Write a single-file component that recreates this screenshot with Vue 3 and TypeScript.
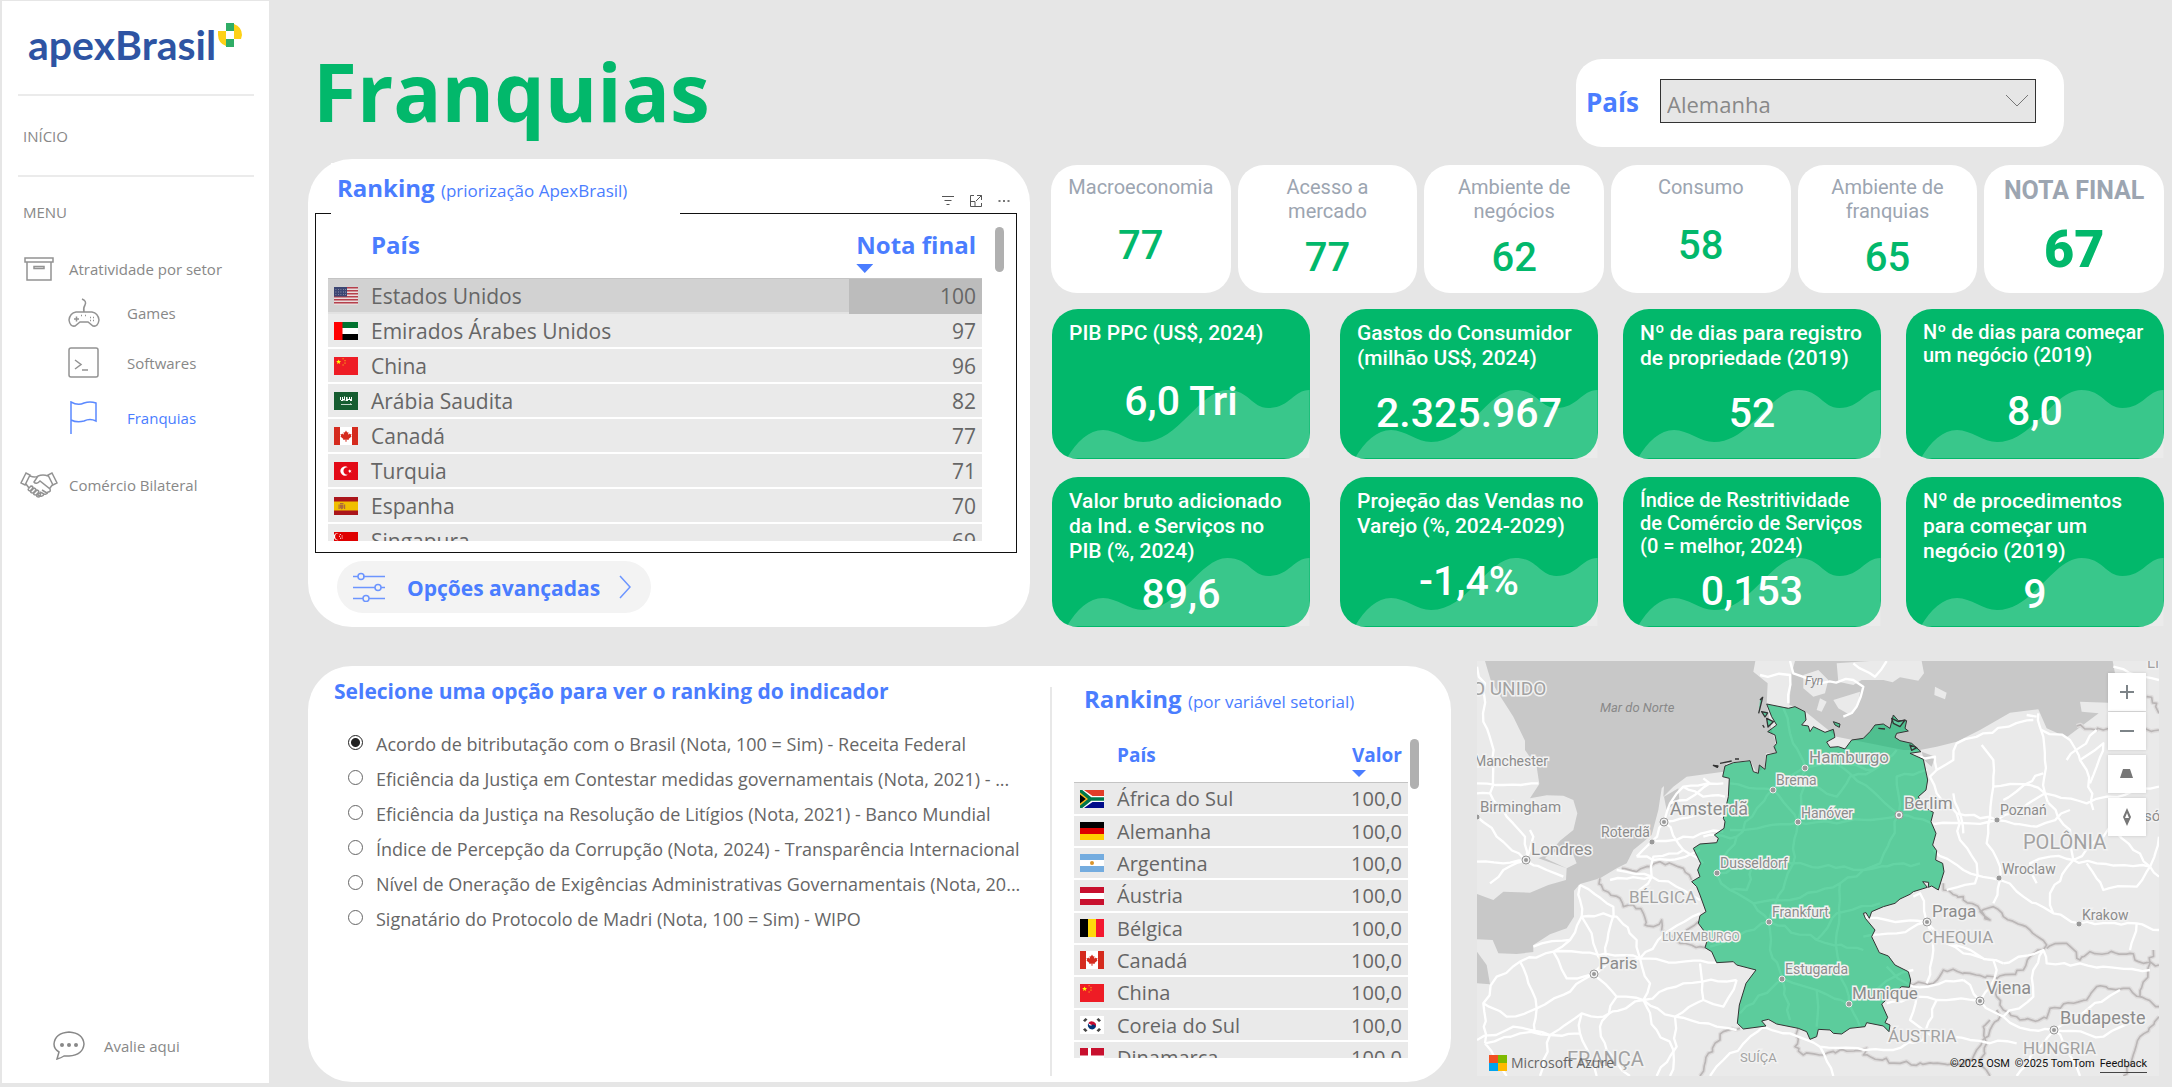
<script setup lang="ts">
import { ref } from 'vue'

interface Shape { d: string; fill: string }
interface Row { flag: string; name: string; value: string }
interface Score { label: string; value: string; final?: boolean }
interface Kpi { lines: string[]; value: string; small?: boolean }
interface City { name: string; x: number; y: number; size: number; dot?: [number, number]; capital?: boolean; cls?: string }

const country = ref('Alemanha')
const indicator = ref(0)

const box = (x: number, y: number, w: number, h: number) => `M${x} ${y}h${w}v${h}h${-w}z`

// Breaks every straight run of a polyline into short, slightly bent pieces.
function rough(d: string, step: number, amp: number): string {
  let seed = 7
  const rand = () => {
    seed = (seed * 16807) % 2147483647
    return seed / 2147483647 - 0.5
  }
  return d
    .split('M')
    .filter(Boolean)
    .map((run) => {
      const n = (run.match(/\d+/g) ?? []).map(Number)
      let out = `M${n[0]} ${n[1]}`
      for (let i = 2; i + 1 < n.length; i += 2) {
        const dx = n[i] - n[i - 2]
        const dy = n[i + 1] - n[i - 1]
        const parts = Math.max(1, Math.round(Math.hypot(dx, dy) / step))
        for (let k = 1; k < parts; k++) {
          const x = n[i - 2] + (dx * k) / parts + rand() * amp
          const y = n[i - 1] + (dy * k) / parts + rand() * amp
          out += `L${x.toFixed(1)} ${y.toFixed(1)}`
        }
        out += `L${n[i]} ${n[i + 1]}`
      }
      return out
    })
    .join('')
}

const flags: Record<string, Shape[]> = {
  us: [
    { d: box(0, 0, 24, 18), fill: '#e9dcdc' },
    { d: [0, 3, 6, 9, 12, 15].map((y) => box(0, y, 24, 1.5)).join(''), fill: '#b5404c' },
    { d: box(0, 0, 13, 9.5), fill: '#3c4673' },
    { d: [2, 4.6, 7.2].map((y) => [1.5, 4, 6.5, 9, 11].map((x) => box(x, y, 0.8, 0.8)).join('')).join(''), fill: '#aab' },
  ],
  ae: [
    { d: box(0, 0, 24, 6), fill: '#00732f' },
    { d: box(0, 6, 24, 6), fill: '#fff' },
    { d: box(0, 12, 24, 6), fill: '#000' },
    { d: box(0, 0, 8.5, 18), fill: '#f00' },
  ],
  cn: [
    { d: box(0, 0, 24, 18), fill: '#ee1c25' },
    { d: 'M4.6 2.4l.7 1.7h1.8l-1.4 1.1.5 1.8-1.6-1.1L3 7l.5-1.8L2.100 4.100h1.800z', fill: '#ff0' },
    { d: box(8.5, 1.3, 1.2, 1) + box(10.5, 3, 1, 1.2) + box(10.5, 5.6, 1, 1.2) + box(8.5, 7.4, 1.2, 1), fill: '#f9b616' },
  ],
  sa: [
    { d: box(0, 0, 24, 18), fill: '#165d31' },
    { d: 'M6 5h1v3h1V5h1v2h1V4.500h1V8h1V5h1.500v2H15V5h1v2h1V5h1v4h-2V8h-2v1h-2V8.500H9V9H7V8H6zM7 12h9v-.6h1v.6h1v.8H7z', fill: '#fff' },
  ],
  ca: [
    { d: box(0, 0, 24, 18), fill: '#fff' },
    { d: box(0, 0, 6, 18) + box(18, 0, 6, 18) + 'M12 3.500l1.200 2 1.200-.6-.3 2.800 1.400-1.300.4.9 1.600-.2-.6 1.800.7.5-3 2.600.2.900-2.300-.3v2.200h-1v-2.200l-2.300.3.2-.9-3-2.600.7-.5-.6-1.800 1.600.2.4-.9 1.400 1.300-.3-2.800 1.200.6z', fill: '#d52b1e' },
  ],
  tr: [
    { d: box(0, 0, 24, 18), fill: '#e30a17' },
    { d: 'M14 5.400a4.600 4.600 0 1 0 0 7.200 3.700 3.700 0 1 1 0-7.200zM15 7.300l1 1.100 1.500-.4-.8 1.200.8 1.200-1.500-.4-1 1.100V9.600l-1.300-.5L15 8.600z', fill: '#fff' },
  ],
  es: [
    { d: box(0, 0, 24, 18), fill: '#aa151b' },
    { d: box(0, 4.5, 24, 9), fill: '#f1bf00' },
    { d: box(4.5, 7.5, 1.2, 4.5) + box(10, 7.5, 1.2, 4.5) + box(6, 6, 3.5, 1.5) + 'M6 8h3.500v3l-1.700 1.500L6 11z', fill: '#ad6a3c' },
  ],
  sg: [
    { d: box(0, 0, 24, 9), fill: '#df0000' },
    { d: box(0, 9, 24, 9), fill: '#fff' },
    { d: 'M4.500 1.200a3.600 3.600 0 1 0 0 6.800 3.400 3.400 0 0 1 0-6.800z' + box(5.8, 2, 1, 1) + box(7.6, 3.4, 1, 1) + box(5, 3.8, 1, 1) + box(6, 5.7, 1, 1) + box(7.7, 5.6, 1, 1), fill: '#fff' },
  ],
  za: [
    { d: box(0, 0, 24, 9), fill: '#e23d28' },
    { d: box(0, 9, 24, 9), fill: '#000c8a' },
    { d: 'M0 0h4l8.500 6H24v6H12.500L4 18H0z', fill: '#fff' },
    { d: 'M0 0h2.300l9 7.300H24v3.400H11.300L2.300 18H0z', fill: '#007749' },
    { d: 'M0 2.600L8 9l-8 6.400z', fill: '#ffb81c' },
    { d: 'M0 4.500L5.800 9 0 13.500z', fill: '#000' },
  ],
  de: [
    { d: box(0, 0, 24, 6), fill: '#000' },
    { d: box(0, 6, 24, 6), fill: '#d00' },
    { d: box(0, 12, 24, 6), fill: '#ffce00' },
  ],
  ar: [
    { d: box(0, 0, 24, 18), fill: '#74acdf' },
    { d: box(0, 6, 24, 6), fill: '#fff' },
    { d: 'M12 7a2 2 0 1 1 0 4 2 2 0 0 1 0-4z', fill: '#d9942c' },
  ],
  at: [
    { d: box(0, 0, 24, 18), fill: '#c8102e' },
    { d: box(0, 6, 24, 6), fill: '#fff' },
  ],
  be: [
    { d: box(0, 0, 8, 18), fill: '#000' },
    { d: box(8, 0, 8, 18), fill: '#ffd90c' },
    { d: box(16, 0, 8, 18), fill: '#f31830' },
  ],
  kr: [
    { d: box(0, 0, 24, 18), fill: '#fff' },
    { d: 'M8.200 7.200a4.300 4.300 0 0 1 7.600 3.800z', fill: '#c60c30' },
    { d: 'M8.200 7.200c-2 5 5 9 7.600 3.800-.3-2.500-3-3-3.800-2s-3 1-3.800-1.800z', fill: '#003478' },
    { d: 'M3 4.500L5.500 2l2 1.500L5 6zM16.500 3.500l2-1.500L21 4.500 19 6zM3 13.500L5 12l2.500 2.500-2 1.500zM16.500 14.500L19 12l2 1.500-2.500 2.500z', fill: '#444' },
  ],
  dk: [
    { d: box(0, 0, 24, 18), fill: '#c8102e' },
    { d: box(8, 0, 3, 18) + box(0, 7.5, 24, 3), fill: '#fff' },
  ],
}

const ranking: Row[] = [
  { flag: 'us', name: 'Estados Unidos', value: '100' },
  { flag: 'ae', name: 'Emirados Árabes Unidos', value: '97' },
  { flag: 'cn', name: 'China', value: '96' },
  { flag: 'sa', name: 'Arábia Saudita', value: '82' },
  { flag: 'ca', name: 'Canadá', value: '77' },
  { flag: 'tr', name: 'Turquia', value: '71' },
  { flag: 'es', name: 'Espanha', value: '70' },
  { flag: 'sg', name: 'Singapura', value: '69' },
]

const sector: Row[] = [
  { flag: 'za', name: 'África do Sul', value: '100,0' },
  { flag: 'de', name: 'Alemanha', value: '100,0' },
  { flag: 'ar', name: 'Argentina', value: '100,0' },
  { flag: 'at', name: 'Áustria', value: '100,0' },
  { flag: 'be', name: 'Bélgica', value: '100,0' },
  { flag: 'ca', name: 'Canadá', value: '100,0' },
  { flag: 'cn', name: 'China', value: '100,0' },
  { flag: 'kr', name: 'Coreia do Sul', value: '100,0' },
  { flag: 'dk', name: 'Dinamarca', value: '100,0' },
]

const scores: Score[] = [
  { label: 'Macroeconomia', value: '77' },
  { label: 'Acesso a mercado', value: '77' },
  { label: 'Ambiente de negócios', value: '62' },
  { label: 'Consumo', value: '58' },
  { label: 'Ambiente de franquias', value: '65' },
  { label: 'NOTA FINAL', value: '67', final: true },
]

const kpis: Kpi[] = [
  { lines: ['PIB PPC (US$, 2024)'], value: '6,0 Tri' },
  { lines: ['Gastos do Consumidor', '(milhão US$, 2024)'], value: '2.325.967' },
  { lines: ['Nº de dias para registro', 'de propriedade (2019)'], value: '52' },
  { lines: ['Nº de dias para começar', 'um negócio (2019)'], value: '8,0', small: true },
  { lines: ['Valor bruto adicionado', 'da Ind. e Serviços no', 'PIB (%, 2024)'], value: '89,6' },
  { lines: ['Projeção das Vendas no', 'Varejo (%, 2024-2029)'], value: '-1,4%' },
  { lines: ['Índice de Restritividade', 'de Comércio de Serviços', '(0 = melhor, 2024)'], value: '0,153', small: true },
  { lines: ['Nº de procedimentos', 'para começar um', 'negócio (2019)'], value: '9' },
]

const indicators: string[] = [
  'Acordo de bitributação com o Brasil (Nota, 100 = Sim) - Receita Federal',
  'Eficiência da Justiça em Contestar medidas governamentais (Nota, 2021) - ...',
  'Eficiência da Justiça na Resolução de Litígios (Nota, 2021) - Banco Mundial',
  'Índice de Percepção da Corrupção (Nota, 2024) - Transparência Internacional',
  'Nível de Oneração de Exigências Administrativas Governamentais (Nota, 20...',
  'Signatário do Protocolo de Madri (Nota, 100 = Sim) - WIPO',
]

const places: City[] = [
  { name: 'O UNIDO', x: -5, y: 34, size: 19, cls: 'land' },
  { name: 'Mar do Norte', x: 123, y: 51, size: 13, cls: 'water' },
  { name: 'Fyn', x: 328, y: 24, size: 12, cls: 'water' },
  { name: 'Manchester', x: -3, y: 105, size: 14 },
  { name: 'Birmingham', x: 3, y: 151, size: 15, dot: [0, 156] },
  { name: 'Londres', x: 54, y: 194, size: 17, dot: [49, 199], capital: true },
  { name: 'Amsterdã', x: 193, y: 154, size: 18, dot: [187, 161], capital: true },
  { name: 'Roterdã', x: 124, y: 176, size: 14, dot: [175, 181] },
  { name: 'BÉLGICA', x: 152, y: 242, size: 17, cls: 'land' },
  { name: 'LUXEMBURGO', x: 185, y: 280, size: 12, cls: 'land' },
  { name: 'Paris', x: 122, y: 308, size: 17, dot: [117, 313], capital: true },
  { name: 'FRANÇA', x: 90, y: 405, size: 20, cls: 'land' },
  { name: 'SUÍÇA', x: 263, y: 401, size: 13, cls: 'land' },
  { name: 'Hamburgo', x: 332, y: 102, size: 17, dot: [328, 107] },
  { name: 'Brema', x: 299, y: 124, size: 14, dot: [296, 129] },
  { name: 'Hanóver', x: 324, y: 157, size: 14, dot: [321, 161] },
  { name: 'Dusseldorf', x: 243, y: 207, size: 14, dot: [240, 212] },
  { name: 'Frankfurt', x: 295, y: 256, size: 14, dot: [292, 261] },
  { name: 'Estugarda', x: 308, y: 313, size: 14, dot: [305, 318] },
  { name: 'Munique', x: 375, y: 338, size: 17, dot: [372, 343] },
  { name: 'Berlim', x: 427, y: 148, size: 17, dot: [422, 154], capital: true },
  { name: 'Poznań', x: 523, y: 154, size: 14, dot: [520, 159] },
  { name: 'POLÔNIA', x: 546, y: 188, size: 20, cls: 'land' },
  { name: 'Wroclaw', x: 525, y: 213, size: 14, dot: [522, 217] },
  { name: 'Krakow', x: 605, y: 259, size: 14, dot: [602, 263] },
  { name: 'Praga', x: 455, y: 256, size: 17, dot: [450, 261], capital: true },
  { name: 'CHEQUIA', x: 445, y: 282, size: 17, cls: 'land' },
  { name: 'Viena', x: 509, y: 333, size: 18, dot: [503, 340], capital: true },
  { name: 'Budapeste', x: 583, y: 363, size: 18, dot: [577, 369], capital: true },
  { name: 'ÁUSTRIA', x: 411, y: 381, size: 17, cls: 'land' },
  { name: 'HUNGRIA', x: 546, y: 393, size: 17, cls: 'land' },
  { name: 'só', x: 667, y: 160, size: 15 },
  { name: 'LI', x: 670, y: 7, size: 15, cls: 'land' },
]

const sea =
  'M45 33L62 90 85 130 130 200 165 272 165 300 200 350 208 402 180 445 230 436 280 437 310 450 322 490 310 540 270 572 225 625 290 655 288 690 235 705 180 728 100 725 70 750 21 732V868L68 870 85 910 140 912 190 906 190 885 240 853 290 835 312 800 312 722 330 702 390 685 440 655 470 640 490 600 545 555 565 480 575 415 582 408 580 440 610 410 650 380 760 365 770 340 840 330 860 370 885 350 888 310 920 310 915 270 905 240 890 165 893 100 850 65 856 33z' +
  'M21 905L50 945 60 1003 21 1000z' +
  'M975 33L965 70 958 165 1000 180 1100 260 1300 300 1350 300 1400 290 1460 275 1530 240 1620 188 1705 178 1730 235 1790 262 1886 190 1835 185 1830 155 1915 158 1935 70 1928 33z' +
  'M1355 305L1395 320 1385 350 1362 330z' +
  'M582 440L625 415 628 450 590 480z' +
  'M205 625L270 600 300 590 320 640 290 655z'
const islands =
  'M1000 75L1045 60 1075 90 1065 130 1030 140 1000 115z' +
  'M1100 40L1200 33H1355L1362 70 1345 92 1290 82 1268 97 1240 90 1175 90 1150 105 1105 95z' +
  'M1090 150L1170 125 1165 165 1140 195 1105 175z' +
  'M1395 110L1430 128 1425 148 1393 135z' +
  'M1050 145l20 10-15 30-15-5z'
const roads = [
  'M21 50L45 100 40 215 65 280 70 350 21 350M70 350L60 430 110 500 165 560 168 632 100 660 60 700M168 632L230 660 280 680M21 500L80 560 168 632M21 635L100 640 168 632M21 400L100 405 205 400M168 632L190 560 180 540M60 430L21 430',
  'M330 705L335 800 300 870 250 905 150 935 80 980 40 1060 45 1180M250 905L360 908 510 925 600 840 690 790M330 705L430 770 415 850 400 940 370 972M370 972L300 1025 200 1075 110 1100 40 1060M370 972L440 1040 520 1050 615 1100 620 1190 560 1278M510 925L540 1000 520 1050 400 1100 335 1090 240 1155 210 1278M510 925L640 935 740 938M520 1050L640 1000 800 990',
  'M370 972L440 930 510 925M440 660L545 680 640 720 690 750M545 680L550 620 640 600 700 640M480 760L545 680 420 690M582 516L640 600M582 516L600 460 640 410 760 400M582 516L700 490 765 500M582 516L545 575 500 620M640 410L700 440 765 440M545 575L640 560 760 545M600 460L650 450 720 400 700 385M500 620L600 630 690 600',
  'M335 1090L330 1150 380 1278M45 1180L150 1150 240 1155 330 1150M45 1180L110 1278M240 1155L130 1130 21 1170M615 1100L700 1050 690 940M615 1100L740 1130 800 1140M800 990L760 1070 700 1050M300 870L215 880 190 890M250 905L290 985 370 972M400 940L370 880 335 800 400 790 440 800 500 870 510 925M150 935L175 1000 200 1075 195 1150M440 1040L390 1130 410 1200 480 1278M520 1050L560 1140 610 1200 600 1278',
  'M740 670L780 720 850 760 897 815 900 900 937 986 1040 1020 1137 1062M740 670L800 560 908 418 1005 352 1100 340 1287 493M984 517L1100 520 1287 493 1390 522M908 418L984 517 970 640 897 815 1040 870 1180 900M1005 352L984 517M1287 493L1230 640 1180 660 1110 700 1100 900 1137 1062M1137 1062L1230 1010 1330 960M740 670L850 640 970 640 1180 660 1350 640M780 540L984 517M908 418L780 400M1005 352L960 250 940 175M1100 340L1210 360 1280 300M1287 493L1280 380 1370 360M937 986L850 1060 810 1090M937 986L960 1110M897 815L800 860 720 890M1040 870L1100 790 1230 760M850 760L960 750 1110 700M1040 1020L1040 1130M850 640L830 720 780 720M800 560L700 560M960 380L1100 440 1140 380 1210 360M1137 1062L1170 1130',
  'M1350 320L1395 320 1400 360 1380 380 1400 430 1460 490 1580 510 1700 530 1800 480M1400 360L1450 330 1460 280 1540 250 1690 210M1535 285L1570 330 1570 410 1560 500 1550 580 1590 650 1590 690 1570 760M1390 522L1500 520 1580 510M1570 410L1680 405 1725 430 1580 510M1705 190L1720 260 1725 430 1800 540 1810 630 1740 730 1750 790M1715 240L1800 270 1830 330 1850 360 1870 480M1725 430L1850 460 1910 440 2067 410M1810 630L1900 560 1920 530 1990 600 2040 650M1390 600L1480 660 1590 690 1660 740 1750 790 1830 820 2000 820 2067 840',
  'M1810 630L1880 640 2040 650 2067 680M1740 620L1810 630M1460 490L1470 570 1520 640 1515 700 1430 720M1370 816L1250 810 1180 800M1370 816L1350 730 1330 740M1370 816L1430 880 1480 910 1600 940M1370 816L1390 900 1370 1000M1180 860L1280 850 1370 816M1430 880L1570 930 1580 960 1530 1053M1531 1053L1400 1050 1340 1040 1250 1060M1531 1053L1600 1100 1680 1140 1753 1140 1850 1080 1950 1020M1753 1140L1790 1200 1830 1278M1753 1140L1700 1200 1640 1278M1340 1040L1320 1110 1390 1160 1500 1170 1640 1180',
  'M1600 940L1720 900 1730 940 1900 950 2040 960M1720 900L1690 960 1690 1040 1600 1100M1753 1140L1900 1160 2000 1110M1450 430L1480 550M1700 200L1670 195M1830 330L1900 280 1880 350 1860 400M1880 240L1790 330M1720 370L1600 450M1850 640L1900 720 2000 710 2040 650M2000 820L1980 900M1250 950L1330 1010 1480 990M1400 1050L1360 1170 1240 1200 1050 1190 960 1150 880 1130 760 1230 720 1278M1050 1190L1090 1278M1480 990L1531 1053M1700 700L1680 640 1740 620M1930 50L2067 90M2040 650L2067 560',
  'M870 75L960 75 955 160M960 33L970 70 1050 100 1150 90 1180 110 1160 170 1120 200M1150 40L1215 80 1250 33',
].map((d) => rough(d, 26, 13))
const borders = [
  'M390 685L400 720 450 745 460 770 490 765 520 790 525 825 550 830 575 810 575 840 630 880 690 890 705 893M455 655L500 665 540 650 570 635 640 655 665 690M635 880L650 840 685 815M690 1278L715 1210 750 1170 760 1145 810 1135M985 1135L975 1190 1000 1215 1060 1215 1110 1200 1190 1195 1180 1215 1290 1240 1390 1240 1480 1245 1520 1200 1560 1140 1590 1100 1580 1080',
  'M1320 1000L1390 1000 1420 960 1500 970 1580 985 1660 960 1680 920 1730 885 1680 840 1600 800 1570 770 1530 785 1560 810 1530 780 1480 750 1480 740 1420 720 1420 700M1730 895L1790 880 1830 930 1860 905 1980 910 2020 940 2067 945M1580 985L1580 1040 1600 1080 1650 1110 1730 1105 1740 1075 1850 1050 1880 1010 1960 1015 2010 1040 2067 1070M2010 1040L2040 940 2050 900M1560 1110L1540 1130 1550 1180 1530 1240 1560 1278M2067 1100L2010 1160 1960 1278M1820 228L1900 240 2067 240M2030 140L2060 160 2067 190',
].map((d) => rough(d, 14, 13))
const germany =
  'M890 162L955 175 975 170 1005 185 1008 210 995 225 1015 228 1020 245 1030 230 1065 247 1090 238 1095 262 1070 276 1080 292 1105 290 1125 297 1145 270 1180 265 1200 245 1215 225 1240 222 1260 235 1270 195 1285 212 1310 212 1305 235 1315 243 1280 250 1275 262 1290 272 1325 280 1353 305 1320 310 1360 328 1373 390 1368 420 1345 440 1360 470 1390 487 1383 515 1398 550 1388 585 1400 602 1397 630 1418 640 1422 665 1405 720 1385 708 1375 712 1376 697 1358 695 1372 712 1330 725 1320 733 1290 747 1275 760 1240 770 1205 785 1198 805 1188 788 1180 790 1186 805 1215 840 1205 860 1228 908 1255 918 1275 945 1315 965 1322 990 1318 1012 1295 1010 1265 1035 1235 1062 1253 1102 1245 1118 1260 1125 1257 1145 1240 1128 1190 1118 1185 1130 1140 1135 1115 1152 1090 1150 1080 1140 1045 1138 1040 1160 1020 1168 1010 1145 985 1135 920 1122 895 1108 875 1113 888 1128 820 1137 802 1120 808 1065 828 1000 858 960 800 945 790 935 740 938 725 905 705 893 715 860 685 820 690 797 708 785 690 735 680 710 665 695 690 680 683 660 692 640 670 595 690 582 740 578 745 565 733 555 762 535 765 515 760 505 775 440 778 385 758 380 765 348 790 338 840 332 850 365 865 370 868 345 885 358 890 315 920 308 912 290 920 280 915 255 893 245 920 225 905 200z' +
  'M1095 225L1090 215 1110 222 1108 232z'
const reefs = 'M870 150L878 142 866 190M875 185l18 4-8 12zM890 205l20 10-16 16zM878 225l5 8M730 346l12 6 2-4zM750 340l35-7M795 327l12 0M1265 205l20 10 20-5-15 20-20-10zM1320 285l20 8-15 8zM1225 235l20 2'
</script>

<template>
  <div class="app">
    <aside class="sidebar">
      <div class="logo">
        <span>apexBrasil</span>
        <svg width="24" height="24" viewBox="0 0 24 24" aria-hidden="true">
          <path fill="#2fad66" d="M8 0h8v8H8zM8 16h8v8H8z" />
          <path fill="#fdd116" d="M16 1a12 12 0 0 1 8 11l-1 4h-7V8zM0 8h8v15A12 12 0 0 1 0 12z" />
          <path fill="#fff" d="M8 8h8v8H8z" />
        </svg>
      </div>
      <nav>
        <a class="plain ruled" href="#inicio">INÍCIO</a>
        <p class="plain">MENU</p>
        <a class="item h44" href="#setor">
          <span class="ico"><svg width="30" height="24" viewBox="0 0 30 24"><path d="M1 1h28v4H1zM3 5v18h24V5M10 9.500h10v2H10z" /></svg></span>
          Atratividade por setor
        </a>
        <a class="item sub h44" href="#games">
          <span class="ico"><svg width="32" height="30" viewBox="0 0 32 30"><path d="M14 1q5 2 3 6-2 3-1 7M8 14h16q6 1 7 8-1 7-6 6l-5-4h-8l-5 4q-5 1-6-6 1-7 7-8zM6 21h5M8.500 18.500v5" /><path d="M13 17.500h1M17 17.500h1M25 19.500h1M22 22.500h1M22 19.500h1M25 22.500h1" /></svg></span>
          Games
        </a>
        <a class="item sub h56" href="#softwares">
          <span class="ico"><svg width="32" height="32" viewBox="0 0 32 32"><rect x="1" y="1" width="29" height="29" rx="2" /><path d="M7 13l6 4.500L7 22M14 23h6" /></svg></span>
          Softwares
        </a>
        <a class="item sub h54 active" href="#franquias">
          <span class="ico"><svg width="32" height="34" viewBox="0 0 32 34"><path d="M3 33V1q7 4 13 1 6-2 12 0v18q-6-3-12 0-7 2-13-1" /></svg></span>
          Franquias
        </a>
        <a class="item h80" href="#bilateral">
          <span class="ico"><svg width="38" height="26" viewBox="0 0 38 26"><path d="M6 1L1 11l4 2 5-10zM32 1l5 10-4 2-5-10zM10 4q5 2 8 0l-4 6q2 3 6-1l10 8q1 3-2 3-1 3-4 2-1 3-4 2l-2-1M28 4q-5-2-10 0M6 12l3 4M33 12l-3 4M9 16l2-2q3 0 1 3l-2 2q-3-1-1-3zM11 19l3-3q3 1 1 3l-2 2q-3 0-2-2zM14 21l3-3q3 1 1 3l-2 2q-3 0-2-2zM17 23l2-2q3 1 0 4-3 0-2-2zM22 18l5 3M20 20l4 2" /></svg></span>
          Comércio Bilateral
        </a>
      </nav>
      <a class="rate" href="#avalie">
        <svg width="32" height="30" viewBox="0 0 32 30"><path d="M4 28l2-7Q1 18 1 13 2 2 16 1q14 1 15 12-1 11-15 12-2 0-5 0-3 2-7 3z" /><g class="dots"><circle cx="9" cy="14" r="2" /><circle cx="16" cy="14" r="2" /><circle cx="23" cy="14" r="2" /></g></svg>
        Avalie aqui
      </a>
    </aside>

    <main>
      <header class="top">
        <h1>Franquias</h1>
        <div class="filter">
          <label for="pais">País</label>
          <div class="select">
            <select id="pais" v-model="country">
              <option>Alemanha</option>
              <option>Argentina</option>
              <option>Canadá</option>
            </select>
            <svg width="24" height="14" viewBox="0 0 24 14" aria-hidden="true"><path d="M1 1l11 11L23 1" /></svg>
          </div>
        </div>
      </header>

      <section class="upper">
        <div class="panel ranking">
          <div class="ranking-head">
            <h2>Ranking <small>(priorização ApexBrasil)</small></h2>
            <div class="tools">
              <button type="button" aria-label="Filtros"><svg width="14" height="14" viewBox="0 0 14 14"><path d="M1 2.500h12M3.500 6.500h7M5.500 10.500h3" /></svg></button>
              <button type="button" aria-label="Modo de foco"><svg width="14" height="14" viewBox="0 0 14 14"><path d="M5 1.500H1.500v11h11V9M8 1.500h4.500V6M12.500 1.500L7 7M1.500 7.500H6v5" /></svg></button>
              <button type="button" aria-label="Mais opções"><svg width="14" height="14" viewBox="0 0 14 14"><path class="solid" d="M1.500 6h2v2h-2zM6 6h2v2H6zM10.500 6h2v2h-2z" /></svg></button>
            </div>
          </div>
          <div class="frame">
            <div class="clip">
              <table class="big">
                <thead>
                  <tr><th class="flag"></th><th>País</th><th class="num"><span>Nota final<i class="sort"></i></span></th></tr>
                </thead>
                <tbody>
                  <tr v-for="(r, i) in ranking" :key="r.name" :class="{ selected: i === 0 }">
                    <td class="flag"><svg width="24" height="18" viewBox="0 0 24 18"><path v-for="(s, k) in flags[r.flag]" :key="k" :d="s.d" :fill="s.fill" /></svg></td>
                    <td>{{ r.name }}</td>
                    <td class="num">{{ r.value }}</td>
                  </tr>
                </tbody>
              </table>
            </div>
            <span class="bar"></span>
          </div>
          <button type="button" class="advanced">
            <svg width="32" height="30" viewBox="0 0 32 30"><path d="M0 4.500h5M10 4.500h22M0 15.500h22M28 15.500h4M0 26.500h10M16 26.500h16" /><circle cx="8" cy="4.500" r="3" /><circle cx="25" cy="15.500" r="3" /><circle cx="13" cy="26.500" r="3" /></svg>
            <span>Opções avançadas</span>
            <svg width="12" height="24" viewBox="0 0 12 24"><path d="M1 1l10 11L1 23" /></svg>
          </button>
        </div>

        <div class="cards">
          <div class="scores">
            <article v-for="s in scores" :key="s.label" :class="{ final: s.final }">
              <h3>{{ s.label }}</h3>
              <p>{{ s.value }}</p>
            </article>
          </div>
          <div class="kpis">
            <article v-for="k in kpis" :key="k.lines[0]" :class="{ small: k.small }">
              <svg class="wave" viewBox="0 0 242 69" preserveAspectRatio="none" aria-hidden="true">
                <path d="M0 69C10 52 22 41 36 41S62 53 76 53C112 53 132 1 160 1 182 1 184 19 201 19 222 19 226 1 242 1V69z" />
              </svg>
              <h3><template v-for="(l, i) in k.lines" :key="l"><br v-if="i" />{{ l }}</template></h3>
              <p>{{ k.value }}</p>
            </article>
          </div>
        </div>
      </section>

      <section class="lower">
        <div class="panel split">
          <fieldset class="options">
            <legend>Selecione uma opção para ver o ranking do indicador</legend>
            <label v-for="(o, i) in indicators" :key="o">
              <input v-model="indicator" type="radio" name="indicator" :value="i" />
              <span>{{ o }}</span>
            </label>
          </fieldset>
          <div class="sector">
            <h2>Ranking <small>(por variável setorial)</small></h2>
            <div class="sector-body">
              <div class="clip">
                <table class="compact">
                  <thead>
                    <tr><th class="flag"></th><th>País</th><th class="num"><span>Valor<i class="sort"></i></span></th></tr>
                  </thead>
                  <tbody>
                    <tr v-for="r in sector" :key="r.name">
                      <td class="flag"><svg width="24" height="18" viewBox="0 0 24 18"><path v-for="(s, k) in flags[r.flag]" :key="k" :d="s.d" :fill="s.fill" /></svg></td>
                      <td>{{ r.name }}</td>
                      <td class="num">{{ r.value }}</td>
                    </tr>
                  </tbody>
                </table>
              </div>
              <span class="bar"></span>
            </div>
          </div>
        </div>

        <div class="map">
          <svg class="canvas" viewBox="0 0 682 415" preserveAspectRatio="xMidYMid slice" role="img" aria-label="Mapa da Alemanha">
            <rect width="682" height="415" fill="#eaeaea" />
            <g transform="scale(0.33333) translate(-21 -33)" fill="none" stroke-linejoin="round">
              <path :d="sea" fill="#c8c8c8" />
              <path :d="islands" fill="#eaeaea" />
              <path v-for="b in borders" :key="b" :d="b" stroke="#dedcdc" stroke-width="13" />
              <path v-for="b in borders" :key="'l' + b" :d="b" stroke="#bab6b6" stroke-width="5" />
              <path v-for="r in roads" :key="r" :d="r" stroke="#fff" stroke-width="7" />
              <path :d="germany" fill="#02b86b" fill-opacity="0.61" stroke="#333" stroke-width="3" />
              <path :d="reefs" fill="#5fcda0" stroke="#333" stroke-width="4" />
            </g>
            <g v-for="p in places" :key="p.name">
              <template v-if="p.dot">
                <circle v-if="p.capital" :cx="p.dot[0]" :cy="p.dot[1]" r="4" fill="#f2f2f2" stroke="#999" stroke-width="1" />
                <circle :cx="p.dot[0]" :cy="p.dot[1]" :r="p.capital ? 2 : 3" fill="#999" stroke="#eee" :stroke-width="p.capital ? 0 : 1" />
              </template>
              <text :x="p.x" :y="p.y" :font-size="p.size" :class="p.cls ?? 'city'">{{ p.name }}</text>
            </g>
          </svg>
          <div class="controls">
            <div class="zoom">
              <button type="button" aria-label="Ampliar"><svg width="16" height="16" viewBox="0 0 16 16"><path d="M1 8h14M8 1v14" /></svg></button>
              <button type="button" aria-label="Reduzir"><svg width="16" height="16" viewBox="0 0 16 16"><path d="M1 8h14" /></svg></button>
            </div>
            <button type="button" aria-label="Inclinação"><svg width="16" height="16" viewBox="0 0 16 16"><path class="solid" d="M4 3h7l3 9H1z" /></svg></button>
            <button type="button" aria-label="Rotação"><svg width="16" height="20" viewBox="0 0 16 20"><path class="solid" fill-rule="evenodd" d="M8 1l4 9-4 9-4-9zM8 6l-2 5h4z" /></svg></button>
          </div>
          <div class="azure">
            <svg width="18" height="16" viewBox="0 0 18 16" aria-hidden="true"><path fill="#f25022" d="M0 0h9v8H0z" /><path fill="#7fba00" d="M9 0h9v8H9z" /><path fill="#00a4ef" d="M0 8h9v8H0z" /><path fill="#ffb900" d="M9 8h9v8H9z" /></svg>
            Microsoft Azure
          </div>
          <div class="credits"><span>©2025 OSM</span><span>©2025 TomTom</span><a href="#feedback">Feedback</a></div>
        </div>
      </section>
    </main>
  </div>
</template>

<style>
body {
  margin: 0;
  background: #e6e6e6;
}
</style>

<style scoped>
* {
  box-sizing: border-box;
}
.app {
  display: flex;
  min-height: 100vh;
  background: #e6e6e6;
  color: #666;
  font-family: 'Open Sans', 'Noto Sans', sans-serif;
}
h1, h2, h3, p {
  margin: 0;
}
button {
  font: inherit;
  border: 0;
  padding: 0;
  cursor: pointer;
}
a {
  color: inherit;
  text-decoration: none;
}
svg {
  display: block;
}

/* Sidebar */
.sidebar {
  flex: none;
  width: 267px;
  margin: 1px 0 4px 2px;
  background: #fff;
  display: flex;
  flex-direction: column;
  font-size: 15px;
  line-height: 20px;
  color: #888;
}
.logo {
  height: 95px;
  margin: 0 15px 0 16px;
  padding: 14px 0 0 10px;
  border-bottom: 2px solid #ebebeb;
  display: flex;
  align-items: flex-start;
  gap: 2px;
  font-family: Lato, sans-serif;
  font-size: 41px;
  font-weight: 700;
  line-height: 60px;
  color: #2e54a3;
}
.logo svg {
  margin-top: 8px;
}
.plain {
  display: flex;
  align-items: center;
  height: 81px;
  padding-left: 5px;
  margin: 0 15px 0 16px;
}
.ruled {
  border-bottom: 2px solid #ebebeb;
}
p.plain {
  height: 70px;
}
.item {
  display: flex;
  align-items: center;
  padding-left: 14px;
}
.item .ico {
  width: 53px;
  padding-left: 8px;
}
.item.h80 .ico {
  padding-left: 4px;
}
.sub {
  padding-left: 58px;
}
.sub .ico {
  width: 67px;
}
.item svg, .rate svg {
  fill: none;
  stroke: currentColor;
  stroke-width: 1.5;
}
.item .ico svg {
  opacity: 0.9;
}
.dots {
  fill: currentColor;
  stroke: none;
}
.h44 { height: 44px; }
.h56 { height: 56px; }
.h54 { height: 54px; }
.h80 { height: 80px; }
.active {
  color: #4a7dff;
}
.rate {
  margin: auto 0 22px 51px;
  display: flex;
  align-items: center;
  gap: 19px;
}

/* Page */
main {
  flex: 1;
  min-width: 0;
  padding: 0 8px 0 39px;
}
.top {
  height: 159px;
  display: flex;
  justify-content: space-between;
  align-items: flex-start;
  padding: 0 100px 0 5px;
}
h1 {
  padding-top: 36px;
  font-size: 80px;
  line-height: 110px;
  font-weight: 700;
  color: #02b86b;
}
.filter {
  width: 488px;
  height: 88px;
  margin-top: 59px;
  padding: 20px 28px 24px 10px;
  border-radius: 26px;
  background: #fff;
  display: flex;
  gap: 22px;
}
.filter label {
  width: 52px;
  font-size: 26px;
  font-weight: 700;
  line-height: 46px;
  color: #4a7dff;
}
.select {
  position: relative;
  flex: 1;
}
.select select {
  width: 100%;
  height: 44px;
  appearance: none;
  border: 1px solid #333;
  border-radius: 0;
  background: #e6e6e6;
  padding: 5px 7px 0 6px;
  font: 22px 'Open Sans', sans-serif;
  color: #888;
}
.select svg {
  position: absolute;
  right: 7px;
  top: 15px;
  fill: none;
  stroke: #777;
  pointer-events: none;
}
.panel {
  background: #fff;
  border-radius: 44px;
}
h2 {
  font-size: 24px;
  line-height: 32px;
  font-weight: 700;
  color: #4a7dff;
  white-space: nowrap;
}
h2 small {
  font-size: 17px;
  font-weight: 400;
}
.upper {
  display: grid;
  grid-template-columns: 722fr 1113fr;
  gap: 21px;
}
.ranking {
  height: 468px;
}
.ranking-head {
  display: flex;
  padding: 4px 19px 0 23px;
  justify-content: space-between;
}
.ranking-head h2 {
  position: relative;
  width: 349px;
  height: 52px;
  padding: 9px 0 0 6px;
  background: #fff;
}
.tools {
  display: flex;
  gap: 14px;
  align-self: flex-end;
  padding-bottom: 7px;
}
.tools button {
  background: none;
}
.tools svg {
  fill: none;
  stroke: #555;
}
.solid {
  fill: #777;
  stroke: none;
}
.frame {
  display: flex;
  height: 340px;
  margin: -2px 13px 0 7px;
  border: 1px solid #111;
  padding: 0 12px;
}
.clip {
  flex: 1;
  height: 327px;
  overflow: hidden;
}
.frame .bar {
  margin: 13px 0 0 13px;
  height: 45px;
}
.bar {
  width: 9px;
  border-radius: 5px;
  background: #b0b0b0;
}
table {
  width: 100%;
  border-collapse: separate;
  border-spacing: 0;
}
th {
  height: 65px;
  padding: 15px 6px 0 7px;
  border-bottom: 1px solid #c4c4c4;
  vertical-align: top;
  text-align: left;
  font-size: 24px;
  font-weight: 700;
  line-height: 32px;
  color: #4a7dff;
}
td {
  height: 35px;
  padding: 1px 6px 0 7px;
  border-bottom: 2px solid #fff;
  background: #eaeaea;
  font-size: 21px;
  line-height: 28px;
}
.flag {
  width: 36px;
  padding: 0 6px;
}
th.num, td.num {
  width: 133px;
  text-align: right;
}
th.num span {
  display: inline-block;
  text-align: left;
}
.sort {
  display: block;
  width: 17px;
  height: 9px;
  margin-top: 3px;
  background: #4a7dff;
  clip-path: polygon(0 0, 100% 0, 50% 100%);
}
.selected td {
  background: #d2d2d2;
  border-bottom-color: #e2e2e2;
}
.selected td.num {
  background: #bcbcbc;
  border-bottom-color: #bcbcbc;
}
.advanced {
  display: flex;
  align-items: center;
  width: 314px;
  height: 52px;
  margin: 8px 0 0 29px;
  padding: 0 20px 0 16px;
  border-radius: 26px;
  background: #f3f3f3;
  color: #4a7dff;
  font-size: 21px;
  font-weight: 700;
}
.advanced span {
  flex: 1;
  text-align: left;
  padding: 2px 0 0 22px;
  white-space: nowrap;
}
.advanced svg {
  fill: none;
  stroke: #6c95ff;
  stroke-width: 1.5;
}

/* Score and indicator cards */
.cards {
  min-width: 0;
  padding-top: 6px;
  font-family: Roboto, sans-serif;
}
.scores {
  display: grid;
  grid-template-columns: repeat(6, minmax(0, 1fr));
  gap: 7px;
  margin-bottom: 16px;
}
.scores article {
  height: 128px;
  padding: 10px 17px 0;
  border-radius: 26px;
  background: #fff;
  display: flex;
  flex-direction: column;
  text-align: center;
}
.scores h3 {
  font-size: 20px;
  line-height: 24px;
  font-weight: 400;
  color: #9ca5b1;
}
.scores p {
  flex: 1;
  display: flex;
  align-items: center;
  justify-content: center;
  font-size: 40px;
  line-height: 48px;
  font-weight: 500;
  color: #02b86b;
}
.scores .final {
  padding: 10px 0 0;
}
.scores .final h3 {
  font-size: 25px;
  line-height: 32px;
  font-weight: 700;
}
.scores .final p {
  font-size: 52px;
  font-weight: 900;
}
.kpis {
  display: grid;
  grid-template-columns: 263fr 258fr 258fr 258fr;
  gap: 18px 25px;
  padding-left: 1px;
}
.kpis article {
  position: relative;
  height: 150px;
  padding: 12px 0 0 17px;
  border-radius: 26px;
  background: #02b86b;
  color: #fff;
  display: flex;
  flex-direction: column;
}
.kpis article:nth-child(4n + 1) {
  margin-right: 5px;
}
.wave {
  position: absolute;
  right: 0;
  bottom: 1px;
  width: 94%;
  height: 69px;
  fill: rgba(255, 255, 255, 0.22);
}
.kpis h3 {
  position: relative;
  font-size: 21px;
  line-height: 25px;
  font-weight: 500;
  white-space: nowrap;
}
.kpis .small h3 {
  font-size: 20px;
  line-height: 23px;
}
.kpis p {
  position: relative;
  flex: 1;
  display: flex;
  align-items: center;
  justify-content: center;
  padding: 0 17px 4px 0;
  font-size: 41px;
  line-height: 48px;
  font-weight: 500;
}

/* Lower area */
.lower {
  display: grid;
  grid-template-columns: 1143fr 682fr;
  gap: 26px;
  padding: 34px 5px 5px 0;
}
.split {
  height: 416px;
  margin-top: 5px;
  display: flex;
  padding: 21px 32px 6px 26px;
}
.options {
  flex: 1;
  min-width: 0;
  border: 0;
  border-right: 2px solid #e8e8e8;
  margin: 0;
  padding: 0;
}
.options legend {
  float: left;
  width: 100%;
  padding: 0;
  margin: -11px 0 20px;
  font-size: 21px;
  line-height: 30px;
  font-weight: 700;
  color: #4a7dff;
}
.options label {
  clear: left;
  display: flex;
  align-items: center;
  gap: 13px;
  height: 35px;
  padding-left: 14px;
  font-size: 18px;
  line-height: 24px;
  white-space: nowrap;
}
.options input {
  appearance: none;
  flex: none;
  width: 15px;
  height: 15px;
  margin: 0 0 3px;
  border: 1px solid #666;
  border-radius: 50%;
  background: #fff;
}
.options input:checked {
  background: radial-gradient(circle, #222 4px, #fff 5px);
  border-color: #222;
}
.sector {
  flex: none;
  width: 367px;
  padding-left: 22px;
}
.sector h2 {
  padding-left: 10px;
  height: 44px;
  margin-top: -4px;
}
.sector-body {
  display: flex;
  gap: 2px;
}
.sector-body .clip {
  height: 331px;
}
.sector-body .bar {
  height: 50px;
  margin-top: 12px;
}
.compact th {
  height: 56px;
  padding-top: 15px;
  font-size: 19px;
  line-height: 26px;
}
.compact td {
  height: 32px;
  font-size: 20px;
  line-height: 26px;
}
.compact tr:nth-child(3n + 1) td {
  height: 33px;
}
.compact th.num, .compact td.num {
  width: 80px;
}
.compact .sort {
  width: 14px;
  height: 7px;
  margin-top: 2px;
}

/* Map */
.map {
  position: relative;
  height: 415px;
  overflow: hidden;
}
.canvas {
  width: 100%;
  height: 100%;
  font-family: Roboto, sans-serif;
}
.canvas text {
  paint-order: stroke;
  stroke: #f2f2f2;
  stroke-width: 3px;
  fill: #8c8c8c;
}
.canvas .land {
  fill: #a2a2a2;
}
.canvas .water {
  fill: #888;
  font-style: italic;
  stroke: none;
}
.controls {
  position: absolute;
  right: 13px;
  top: 12px;
  display: flex;
  flex-direction: column;
  gap: 5px;
}
.zoom {
  display: flex;
  flex-direction: column;
  gap: 1px;
}
.controls button {
  width: 38px;
  height: 38px;
  display: flex;
  align-items: center;
  justify-content: center;
  background: #fff;
  box-shadow: 0 0 3px rgba(0, 0, 0, 0.15);
}
.controls svg {
  stroke: #7d8488;
  stroke-width: 2;
}
.azure {
  position: absolute;
  left: 12px;
  bottom: 3px;
  display: flex;
  align-items: center;
  gap: 4px;
  font-size: 14px;
  line-height: 20px;
  color: #666;
}
.credits {
  position: absolute;
  right: 12px;
  bottom: 3px;
  display: flex;
  gap: 5px;
  font-family: Roboto, sans-serif;
  font-size: 11px;
  line-height: 16px;
  color: #111;
}
.credits a {
  border-bottom: 1px solid #444;
}
</style>
